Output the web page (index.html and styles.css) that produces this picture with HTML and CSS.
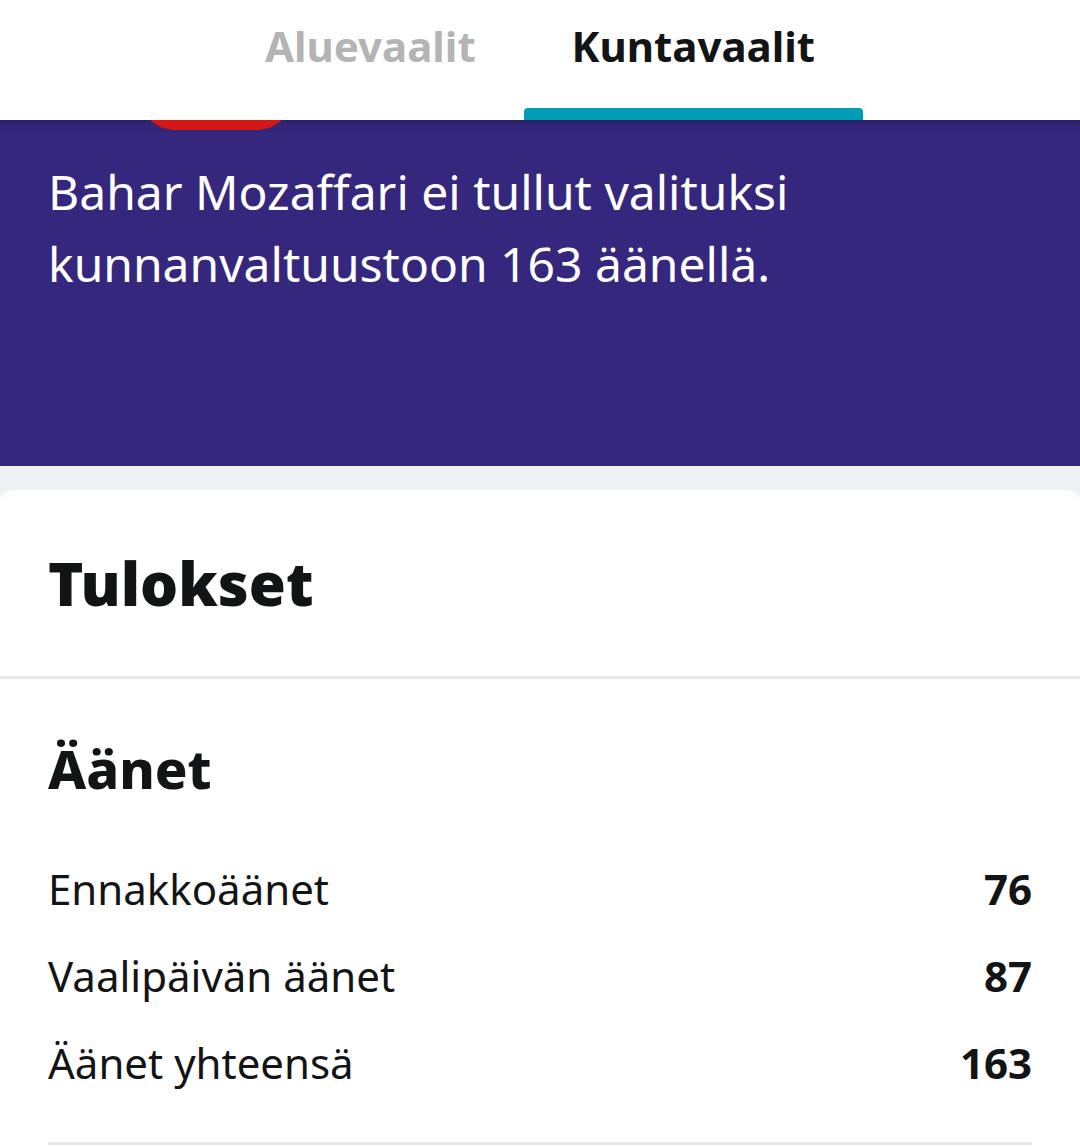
FILE: index.html
```html
<!DOCTYPE html>
<html lang="fi">
<head>
    <meta charset="UTF-8">
    <meta name="viewport" content="width=device-width, initial-scale=1.0">
    <title>Kuntavaalit</title>
    <link rel="stylesheet" href="styles.css">
</head>
<body>

<header class="header">
    <nav class="tabs">
        <a class="tab" href="#aluevaalit">Aluevaalit</a>
        <a class="tab active" href="#kuntavaalit" aria-current="page">Kuntavaalit</a>
    </nav>
</header>

<main class="content" id="kuntavaalit">
    <section class="hero">
        <div class="badge"></div>
        <p class="hero-text">Bahar Mozaffari ei tullut valituksi kunnanvaltuustoon 163 äänellä.</p>
    </section>

    <section class="card">
        <h1 class="card-title">Tulokset</h1>

        <div class="votes">
            <h2 class="votes-title" id="votes-title">Äänet</h2>
            <table class="votes-table" aria-labelledby="votes-title">
                <tbody>
                    <tr>
                        <th scope="row">Ennakkoäänet</th>
                        <td>76</td>
                    </tr>
                    <tr>
                        <th scope="row">Vaalipäivän äänet</th>
                        <td>87</td>
                    </tr>
                    <tr>
                        <th scope="row">Äänet yhteensä</th>
                        <td>163</td>
                    </tr>
                </tbody>
            </table>
        </div>
    </section>
</main>

</body>
</html>
```

FILE: styles.css
```css
* {
    box-sizing: border-box;
}

body {
    display: flex;
    flex-direction: column;
    min-height: 100vh;
    margin: 0;
    font-family: 'Noto Sans', 'Open Sans', sans-serif;
    font-size: 42px;
    color: #131415;
    background-color: #f0f1f4;
}

/* Header */
.header {
    position: sticky;
    top: 0;
    z-index: 1;
    background-color: #ffffff;
}

.tabs {
    display: flex;
    justify-content: center;
}

.tab {
    padding: 12px 48px 0;
    line-height: 68px;
    font-weight: 700;
    color: #b4b4b4;
    text-decoration: none;
}

/* Underline of the tab */
.tab::after {
    content: "";
    display: block;
    height: 12px;
    margin: 28px -48px 0;
    border-radius: 4px 4px 0 0;
}

.tab.active {
    color: #131415;
}

.tab.active::after {
    background-color: #009bb5;
}

.content {
    display: flex;
    flex-direction: column;
    flex: 1;
}

/* Hero */
.hero {
    padding: 0 48px 166px;
    overflow: hidden;
    color: #ffffff;
    background-color: #35277d;
    box-shadow: inset 0 12px 12px -12px rgba(0, 0, 0, 0.3);
}

/* Pill that is scrolled under the header */
.badge {
    width: 154px;
    height: 72px;
    margin: -62px 0 26px 91px;
    border-radius: 36px;
    background-color: #d51717;
}

.hero-text {
    max-width: 840px;
    margin: 0;
    font-size: 48px;
    font-weight: 400;
    line-height: 72px;
}

/* Results */
.card {
    flex: 1;
    margin-top: 24px;
    border-radius: 12px 12px 0 0;
    background-color: #ffffff;
}

.card-title {
    margin: 0;
    padding: 48px;
    border-bottom: 3px solid #e8e8e8;
    font-size: 60px;
    font-weight: 900;
    line-height: 90px;
}

.votes {
    margin: 0 48px;
    padding: 48px 0 36px;
    border-bottom: 3px solid #e8e8e8;
}

.votes-title {
    margin: 0 0 36px;
    font-size: 54px;
    font-weight: 800;
    line-height: 82px;
}

.votes-table {
    width: 100%;
    border-collapse: collapse;
    line-height: 87px;
}

.votes-table th,
.votes-table td {
    padding: 0;
}

.votes-table th {
    text-align: left;
    font-weight: 400;
}

.votes-table td {
    text-align: right;
    font-weight: 700;
}
```
